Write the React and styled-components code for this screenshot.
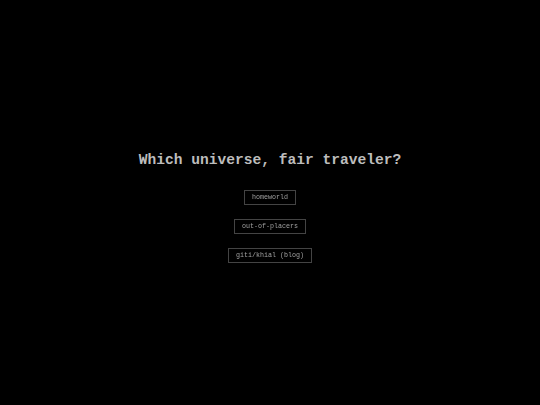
import React from "react";
import styled, { createGlobalStyle } from "styled-components";

const Global = createGlobalStyle`
  html, body { margin: 0; padding: 0; background: #000; }
  body { font-family: "Liberation Mono", "Courier New", monospace; }
`;

const Page = styled.main`
  min-height: 100vh;
  box-sizing: border-box;
  padding-top: 10px;
  display: flex;
  flex-direction: column;
  align-items: center;
  justify-content: center;
  background: #000;
`;

const Title = styled.h1`
  margin: 0 0 21px;
  font-family: "Liberation Mono", "Courier New", monospace;
  font-size: 14.6px;
  line-height: 17px;
  font-weight: bold;
  color: #bdbdbd;
`;

const Links = styled.nav`
  display: flex;
  flex-direction: column;
  align-items: center;
  gap: 14px;
`;

const LinkButton = styled.a`
  display: block;
  box-sizing: border-box;
  height: 15px;
  padding: 0 7px;
  border: 1px solid #444;
  font-family: "Liberation Mono", "Courier New", monospace;
  font-size: 6.67px;
  line-height: 13px;
  color: #a0a0a0;
  text-decoration: none;
  white-space: nowrap;
  will-change: transform;
  -webkit-font-smoothing: antialiased;
  &:link, &:visited { color: #a0a0a0; }
`;

const links = ["homeworld", "out-of-placers", "giti/khial (blog)"];

export default function App() {
  return (
    <>
      <Global />
      <Page>
        <Title>Which universe, fair traveler?</Title>
        <Links>
          {links.map((l) => (
            <LinkButton key={l} href="#">
              {l}
            </LinkButton>
          ))}
        </Links>
      </Page>
    </>
  );
}
